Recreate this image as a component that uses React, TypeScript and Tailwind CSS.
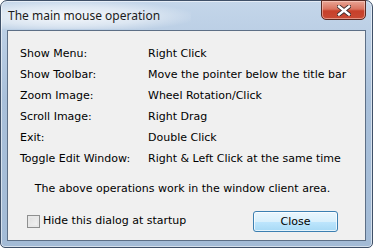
const rows: [string, string][] = [
  ["Show Menu:", "Right Click"],
  ["Show Toolbar:", "Move the pointer below the title bar"],
  ["Zoom Image:", "Wheel Rotation/Click"],
  ["Scroll Image:", "Right Drag"],
  ["Exit:", "Double Click"],
  ["Toggle Edit Window:", "Right & Left Click at the same time"],
];

export default function App() {
  return (
    <div className="w-[373px] h-[248px] bg-white">
      {/* WINDOW FRAME */}
      <div className="relative flex flex-col w-[373px] h-[248px] rounded-t-[7px] rounded-b-[5px] border border-[#3f5068] bg-[linear-gradient(180deg,#c4d6ea_0%,#a9c0da_40%,#a3bbd6_100%)] shadow-[inset_0_0_0_1px_rgba(255,255,255,0.55)]">
        {/* TITLE BAR */}
        <div className="relative flex items-center h-[28px] px-[7px]">
          <div className="absolute left-0 top-0 w-[190px] h-[28px] bg-[radial-gradient(ellipse_at_35%_55%,rgba(255,255,255,0.85)_0%,rgba(255,255,255,0.45)_45%,rgba(255,255,255,0)_75%)]" />
          <span className="relative text-[12px] text-[#1b1b1b] font-['Noto_Sans',sans-serif] leading-none mt-[1px]">
            The main mouse operation
          </span>
        </div>

        {/* CLOSE BUTTON */}
        <div className="absolute top-[-1px] right-[6px] w-[45px] h-[20px] rounded-b-[5px] border border-[#5a2a22] bg-[linear-gradient(180deg,#e8a595_0%,#d9735f_45%,#c7402a_55%,#c84a34_100%)] flex items-center justify-center shadow-[inset_0_0_0_1px_rgba(255,220,210,0.5)]">
          <svg width="14" height="11" viewBox="0 0 14 11">
            <path d="M2 1.5 L12 9.5 M12 1.5 L2 9.5" stroke="#3a2a2a" strokeWidth="4.2" strokeLinecap="square" />
            <path d="M2 1.5 L12 9.5 M12 1.5 L2 9.5" stroke="#ffffff" strokeWidth="2.4" strokeLinecap="square" />
          </svg>
        </div>

        {/* CLIENT AREA */}
        <div className="flex-1 mx-[6px] mb-[6px] mt-[1px] border border-[#5d6f86] bg-[#f0f0f0] font-['DejaVu_Sans',sans-serif] text-[11px] text-black">
          <div className="grid grid-cols-[128px_1fr] pl-[12px] pt-[12px]">
            {rows.map(([k, v]) => (
              <div key={k} className="contents">
                <div className="h-[21px] leading-[21px] whitespace-nowrap">{k}</div>
                <div className="h-[21px] leading-[21px] whitespace-nowrap">{v}</div>
              </div>
            ))}
          </div>

          <div className="mt-[10px] h-[20px] leading-[20px] text-center pr-[8px] whitespace-nowrap">
            The above operations work in the window client area.
          </div>

          <div className="flex items-center justify-between mt-[12px] pl-[19px] pr-[27px]">
            <label className="flex items-center gap-[3px]">
              <span className="w-[13px] h-[13px] border border-[#8e8f8f] bg-[linear-gradient(135deg,#dcdcdc_0%,#f6f6f6_100%)] shadow-[inset_0_0_0_2px_#e8e8e8]" />
              <span className="whitespace-nowrap">Hide this dialog at startup</span>
            </label>
            <button className="w-[85px] h-[21px] rounded-[3px] border border-[#3c7fb1] bg-[linear-gradient(180deg,#eaf6fd_0%,#d9f0fc_50%,#bee6fd_51%,#a7d9f5_100%)] shadow-[inset_0_0_0_1px_rgba(255,255,255,0.7)] text-[11px] leading-none">
              Close
            </button>
          </div>
        </div>
      </div>
    </div>
  );
}
